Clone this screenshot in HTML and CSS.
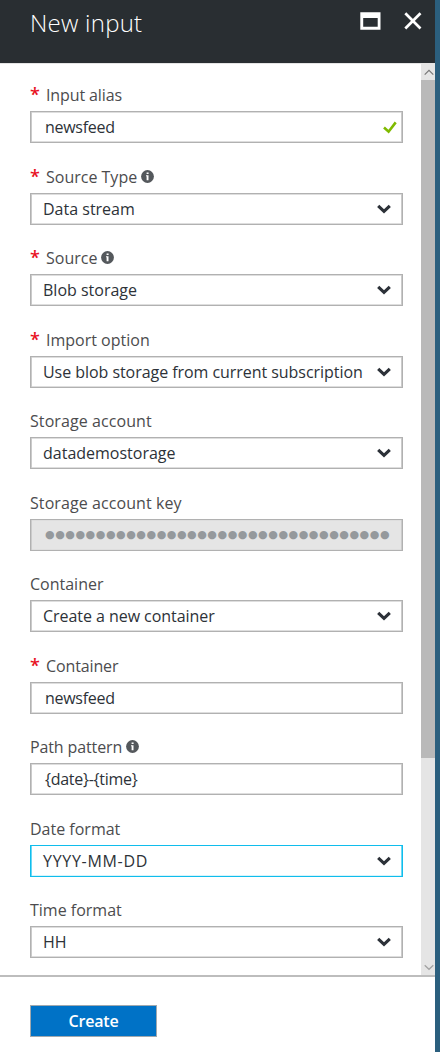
FILE: index.html
```
<!DOCTYPE html>
<html lang="en">
<head>
<meta charset="utf-8">
<title>New input</title>
<link rel="stylesheet" href="styles.css">
</head>
<body>
<svg class="defs" width="0" height="0">
  <symbol id="chevron" viewBox="0 0 14 10"><path d="M1.2 1.8 7 7.4 12.8 1.8" fill="none" stroke="#2c3138" stroke-width="3.1"/></symbol>
  <symbol id="info" viewBox="0 0 13 13"><circle cx="6.5" cy="6.5" r="6.4" fill="#54585c"/><path d="M5.6 2.4h2v1.7h-2zM5 5.3h2.5v5H5.6v-4H5z" fill="#fff"/></symbol>
</svg>
<div class="blade">
  <header class="header">
    <h1 class="title">New input</h1>
    <div class="actions">
      <svg width="21" height="18" viewBox="0 0 21 18"><path fill="#fff" fill-rule="evenodd" d="M.3.3h20.2v17.4H.3zM3.2 6v8.8h14.5V6z"/></svg>
      <svg width="18" height="18" viewBox="0 0 18 18"><path d="M1.3 1.3 16.5 16.5M16.5 1.3 1.3 16.5" stroke="#fff" stroke-width="2.7"/></svg>
    </div>
  </header>
  <div class="body">
    <form class="form">
      <div class="field"><div class="label"><span class="star">*</span><span class="tight">Input alias</span></div>
        <div class="box input"><span class="name">newsfeed</span><svg width="14" height="13" viewBox="0 0 14 13"><path d="M1 6.5 5.6 10.7 12.7 1.4" fill="none" stroke="#7fba00" stroke-width="2.6"/></svg></div></div>
      <div class="field"><div class="label"><span class="star">*</span><span>Source Type</span><svg class="info"><use href="#info"/></svg></div>
        <div class="box"><span>Data stream</span><svg class="chev"><use href="#chevron"/></svg></div></div>
      <div class="field"><div class="label"><span class="star">*</span><span>Source</span><svg class="info"><use href="#info"/></svg></div>
        <div class="box"><span>Blob storage</span><svg class="chev"><use href="#chevron"/></svg></div></div>
      <div class="field"><div class="label"><span class="star">*</span><span>Import option</span></div>
        <div class="box"><span class="long">Use blob storage from current subscription</span><svg class="chev"><use href="#chevron"/></svg></div></div>
      <div class="field"><div class="label"><span class="loose">Storage account</span></div>
        <div class="box"><span>datademostorage</span><svg class="chev"><use href="#chevron"/></svg></div></div>
      <div class="field"><div class="label"><span class="loose">Storage account key</span></div>
        <div class="box input disabled"><span class="dots">●●●●●●●●●●●●●●●●●●●●●●●●●●●●●●●●●●</span></div></div>
      <div class="field"><div class="label"><span>Container</span></div>
        <div class="box"><span class="long">Create a new container</span><svg class="chev"><use href="#chevron"/></svg></div></div>
      <div class="field"><div class="label"><span class="star">*</span><span class="tight">Container</span></div>
        <div class="box input"><span class="name">newsfeed</span></div></div>
      <div class="field"><div class="label"><span class="tight">Path pattern</span><svg class="info"><use href="#info"/></svg></div>
        <div class="box input"><span class="pattern">{date}-{time}</span></div></div>
      <div class="field"><div class="label"><span>Date format</span></div>
        <div class="box focus"><span class="date">YYYY-MM-DD</span><svg class="chev"><use href="#chevron"/></svg></div></div>
      <div class="field"><div class="label"><span>Time format</span></div>
        <div class="box"><span>HH</span><svg class="chev"><use href="#chevron"/></svg></div></div>
    </form>
    <div class="scrollbar">
      <div class="arrow"><svg width="10" height="7" viewBox="0 0 10 7"><path d="M.7 5.7 5 1.4 9.3 5.7" fill="none" stroke="#777" stroke-width="1.2"/></svg></div>
      <div class="thumb"></div>
      <div class="arrow bottom"><svg width="10" height="7" viewBox="0 0 10 7"><path d="M.7 1.2 5 5.3 9.3 1.2" fill="none" stroke="#a2a2a2" stroke-width="1.2"/></svg></div>
    </div>
  </div>
  <footer class="footer"><button class="create">Create</button></footer>
</div>
</body>
</html>
```
FILE: styles.css
```
* { box-sizing: border-box; }
body { margin: 0; background: #2b5f7e; font-family: "Open Sans", "Noto Sans", sans-serif; }
.defs { display: block; }
.blade { width: 435px; height: 1052px; background: #fff; display: flex; flex-direction: column; }
.header { height: 63px; flex: none; background: #292e32; display: flex; justify-content: space-between; padding: 5px 13px 0 30px; }
.title { margin: 0; font-size: 24px; line-height: 36px; font-weight: 300; letter-spacing: 0.25px; color: #fff; }
.actions { display: flex; gap: 23px; padding-top: 7px; }
.body { height: 912px; flex: none; display: flex; border-top: 1px solid #e4e4e4; }
.form { width: 421px; padding: 20.3px 18px 0 30px; overflow: hidden; }
.field { height: 81.5px; }
.label { height: 27px; line-height: 22px; display: flex; font-size: 16px; color: #4c4c4e; white-space: nowrap; }
.star { width: 16px; font-size: 18px; line-height: 21px; font-weight: 600; color: #e81123; }
.info { width: 13px; height: 13px; margin: 4px 0 0 4px; }
.loose { letter-spacing: 0.08px; }
.tight { letter-spacing: -0.12px; }
.name { letter-spacing: -0.28px; }
.long { letter-spacing: -0.05px; }
.pattern { letter-spacing: -0.28px; }
.date { letter-spacing: 0.7px; }
.box { height: 32px; width: 373px; border: 1px solid #b1b1b1; box-shadow: inset 1px 0 #cbcbcb, inset -1px 0 #cbcbcb, inset 0 1px #dedede, inset 0 -1px #dedede; padding: 0 11px 0 12px; display: flex; align-items: center; justify-content: space-between; font-size: 16px; color: #2d3238; white-space: nowrap; line-height: 30px; }
.input { padding: 0 5px 0 14px; }
.disabled { background: #e5e5e5; }
.dots { font-family: "DejaVu Sans", sans-serif; font-size: 11px; letter-spacing: 0.55px; color: #95999c; }
.focus { border-color: #10bdec; box-shadow: inset 1px 0 #6bd8f5, inset -1px 0 #6bd8f5, inset 0 -1px #d5f4fc; }
.chev { width: 14px; height: 10px; }
.scrollbar { width: 14px; background: #e5e5e5; display: flex; flex-direction: column; }
.arrow { height: 16px; padding-left: 3px; display: flex; align-items: center; }
.bottom { margin-top: auto; }
.thumb { height: 678px; background: #b9b9b9; }
.footer { flex: 1; border-top: 2px solid #bdbdbd; padding: 28px 0 0 30px; }
.create { display: block; width: 127px; height: 32px; padding: 0; border: 1px solid #a0a8ae; background: #0072c6; color: #fff; font: 600 16px/31px "Open Sans", sans-serif; letter-spacing: -0.2px; }
```
